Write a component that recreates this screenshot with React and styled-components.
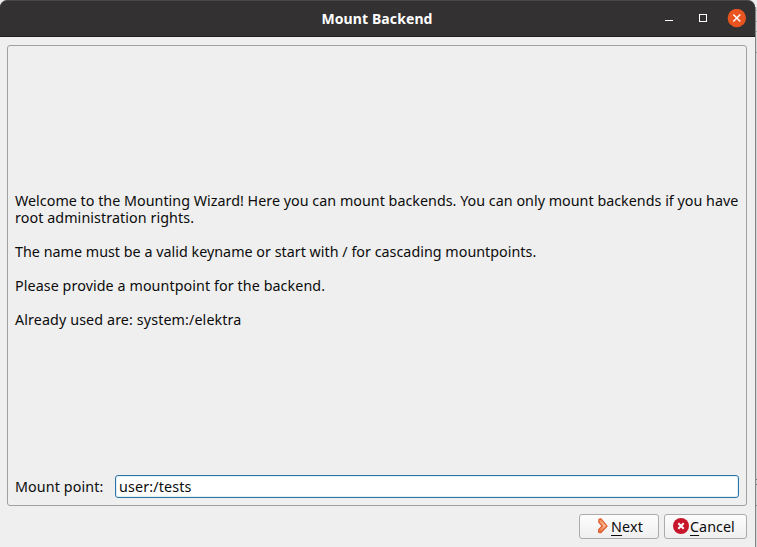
import React from "react";
import styled, { createGlobalStyle } from "styled-components";

const GlobalStyle = createGlobalStyle`
  * { box-sizing: border-box; }
  body { margin: 0; overflow: hidden; }
`;

const Desktop = styled.div`
  display: flex;
  width: 757px;
  height: 547px;
  background: #ededed;
  font-family: "Noto Sans", "Open Sans", sans-serif;
  font-size: 14.3px;
  color: #0c0c0c;
`;

const Window = styled.main`
  display: flex;
  flex-direction: column;
  width: 755px;
  height: 547px;
  background: #efefef;
  border-radius: 7px 7px 0 0;
`;

const WindowEdge = styled.div`
  width: 2px;
  margin-top: 7px;
  border-left: 1px solid #858585;
  background: linear-gradient(#b5b5b5, #b5b5b5) 0 3px / 2px 1px no-repeat,
    linear-gradient(#999, #999) 0 14px / 2px 1px no-repeat,
    linear-gradient(#999, #999) 0 24px / 2px 1px no-repeat,
    linear-gradient(#999, #999) 0 45px / 2px 1px no-repeat,
    linear-gradient(#777, #777) 0 472px / 2px 1px no-repeat,
    linear-gradient(#777, #777) 0 477px / 2px 1px no-repeat,
    linear-gradient(#888, #888) 0 498px / 2px 1px no-repeat,
    #d6d6d6;
`;

const TitleBar = styled.header`
  display: grid;
  grid-template-columns: 1fr auto 1fr;
  align-items: center;
  height: 37px;
  padding: 0 9px;
  background: #333131;
  border-top: 1px solid #484646;
  border-bottom: 1px solid #202020;
  border-radius: 7px 7px 0 0;
`;

const Title = styled.h1`
  grid-column: 2;
  margin: 0 1px 0 0;
  font-size: 14px;
  line-height: 20px;
  font-weight: 700;
  letter-spacing: ${(p) => p.$track};
  color: #fff;
`;

const WindowControls = styled.div`
  display: flex;
  justify-content: flex-end;
`;

const ControlIcon = styled.svg`
  display: block;
`;

const Page = styled.section`
  display: flex;
  flex-direction: column;
  width: 740px;
  height: 461px;
  margin: 8px 0 0 7px;
  padding: 0 7px 7px;
  border: 1px solid #a0a0a0;
  border-radius: 3px;
`;

const Intro = styled.div`
  flex: 1;
  padding-top: 146px;
`;

const Line = styled.p`
  margin: 0 0 ${(p) => p.$gap || 0}px;
  line-height: 17px;
  white-space: nowrap;
  letter-spacing: ${(p) => p.$track};
`;

const FieldRow = styled.div`
  display: flex;
  align-items: center;
  height: 23px;
`;

const Label = styled.label`
  width: 100px;
  white-space: nowrap;
  letter-spacing: ${(p) => p.$track};
`;

const TextField = styled.input`
  width: 624px;
  height: 23px;
  padding: 0 3px;
  border: 1px solid #2a75a8;
  border-radius: 3px;
  outline: none;
  background: #fff;
  box-shadow: inset 0 0 0 1px #e3eef5;
  color: inherit;
  font: inherit;
  letter-spacing: ${(p) => p.$track};
`;

const ButtonRow = styled.footer`
  display: flex;
  justify-content: flex-end;
  gap: 5px;
  padding: 8px 8px 0 0;
`;

const Button = styled.button`
  display: flex;
  align-items: center;
  width: ${(p) => p.$width}px;
  height: 25px;
  padding: 0 0 0 ${(p) => p.$inset}px;
  border: 1px solid #ababab;
  border-radius: 3px;
  background: linear-gradient(#fdfdfd, #efefef);
  color: inherit;
  font: inherit;
  letter-spacing: ${(p) => p.$track};
`;

const ButtonIcon = styled.svg`
  flex: none;
  width: 16px;
  height: 16px;
  margin-top: -1px;
`;

const Caption = styled.span`
  line-height: 17px;
  padding-bottom: 1px;
  margin-left: ${(p) => p.$gap || 0}px;
`;

const Mnemonic = styled.span`
  text-decoration: underline;
  text-decoration-thickness: 1px;
  text-underline-offset: 3px;
`;

export default function App() {
  return (
    <>
      <GlobalStyle />
      <Desktop>
        <Window>
          <TitleBar>
            <Title $track="0.1px">Mount Backend</Title>
            <WindowControls>
              <ControlIcon width="84" height="20" viewBox="0 0 84 20">
                <path d="M3 11.5h8" stroke="#fff" />
                <rect x="37.5" y="5.5" width="7" height="7" fill="none" stroke="#fff" />
                <circle cx="74.8" cy="9" r="9.2" fill="#e95420" />
                <path d="M71.3 5.5l7 7m0-7l-7 7" stroke="#fff" strokeWidth="1.5" />
              </ControlIcon>
            </WindowControls>
          </TitleBar>
          <Page>
            <Intro>
              <Line $track="0.022px">Welcome to the Mounting Wizard! Here you can mount backends. You can only mount backends if you have</Line>
              <Line $track="0.08px" $gap={17}>root administration rights.</Line>
              <Line $track="0.02px" $gap={17}>The name must be a valid keyname or start with / for cascading mountpoints.</Line>
              <Line $track="0.08px" $gap={17}>Please provide a mountpoint for the backend.</Line>
              <Line $track="0.11px">Already used are: system:/elektra</Line>
            </Intro>
            <FieldRow>
              <Label htmlFor="mountpoint" $track="0.1px">Mount point:</Label>
              <TextField id="mountpoint" defaultValue="user:/tests" $track="0.15px" />
            </FieldRow>
          </Page>
          <ButtonRow>
            <Button $width={80} $inset={15} $track="0.2px">
              <ButtonIcon viewBox="0 0 16 16">
                <defs>
                  <linearGradient id="arrow" x1="0" y1="0" x2="0" y2="1">
                    <stop offset="0" stopColor="#f08a50" />
                    <stop offset="0.5" stopColor="#fab896" />
                    <stop offset="1" stopColor="#e8622a" />
                  </linearGradient>
                </defs>
                <path d="M4 1.2l1.7-.5 6.4 7.3-6.4 6.8-2-.3v-3.2l3.6-3.3-3.6-3.8z" fill="url(#arrow)" stroke="#dc5424" strokeWidth="1.1" strokeLinejoin="round" />
              </ButtonIcon>
              <Caption><Mnemonic>N</Mnemonic>ext</Caption>
            </Button>
            <Button $width={83} $inset={8} $track="0.05px">
              <ButtonIcon viewBox="0 0 16 16">
                <circle cx="8" cy="8" r="8" fill="#c7162b" />
                <path d="M5.3 5.3l5.4 5.4m0-5.4l-5.4 5.4" stroke="#fff" strokeWidth="2" />
              </ButtonIcon>
              <Caption $gap={1}><Mnemonic>C</Mnemonic>ancel</Caption>
            </Button>
          </ButtonRow>
        </Window>
        <WindowEdge />
      </Desktop>
    </>
  );
}
